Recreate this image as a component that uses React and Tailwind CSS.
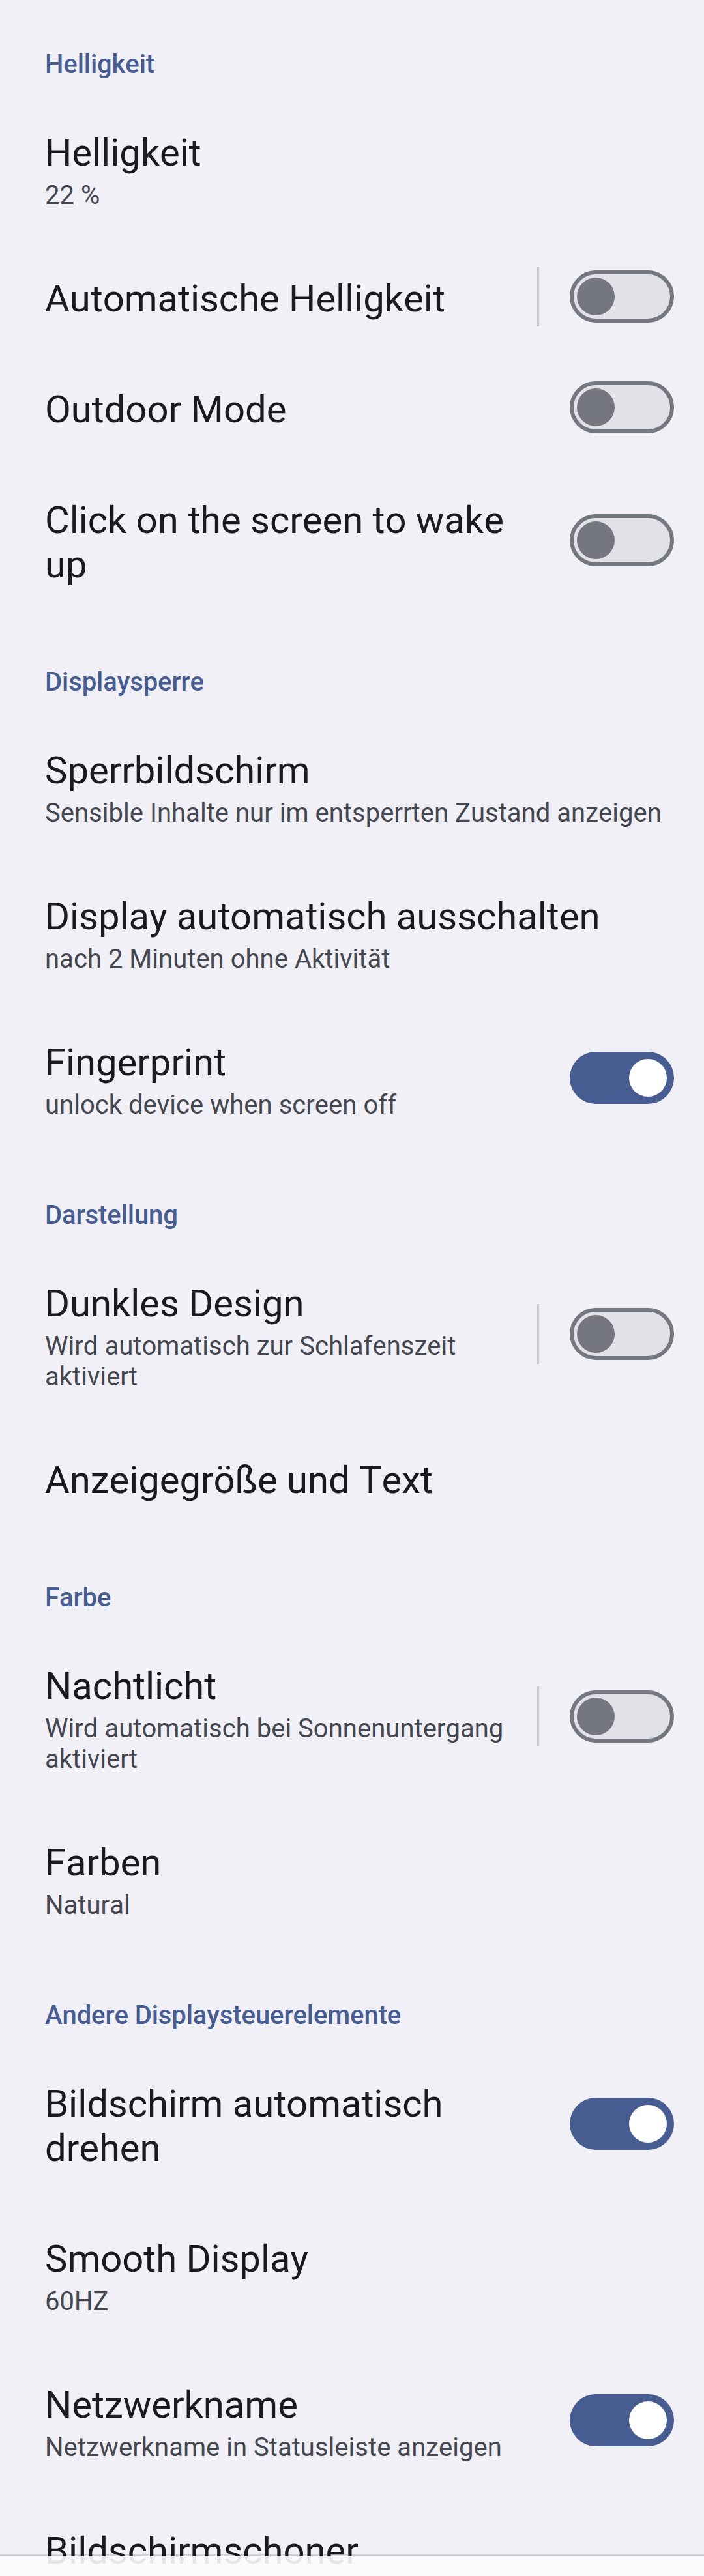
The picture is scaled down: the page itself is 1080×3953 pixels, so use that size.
const sections = [
    {
        title: 'Helligkeit',
        items: [
            { title: 'Helligkeit', summary: '22 %' },
            { title: 'Automatische Helligkeit', toggle: true, divider: true, checked: false },
            { title: 'Outdoor Mode', toggle: true, checked: false },
            { title: 'Click on the screen to wake up', toggle: true, checked: false },
        ],
    },
    {
        title: 'Displaysperre',
        items: [
            { title: 'Sperrbildschirm', summary: 'Sensible Inhalte nur im entsperrten Zustand anzeigen' },
            { title: 'Display automatisch ausschalten', summary: 'nach 2 Minuten ohne Aktivität' },
            { title: 'Fingerprint', summary: 'unlock device when screen off', toggle: true, checked: true },
        ],
    },
    {
        title: 'Darstellung',
        items: [
            { title: 'Dunkles Design', summary: 'Wird automatisch zur Schlafenszeit aktiviert', toggle: true, divider: true, checked: false },
            { title: 'Anzeigegröße und Text' },
        ],
    },
    {
        title: 'Farbe',
        items: [
            { title: 'Nachtlicht', summary: 'Wird automatisch bei Sonnenuntergang aktiviert', toggle: true, divider: true, checked: false },
            { title: 'Farben', summary: 'Natural' },
        ],
    },
    {
        title: 'Andere Displaysteuerelemente',
        items: [
            { title: 'Bildschirm automatisch drehen', toggle: true, checked: true },
            { title: 'Smooth Display', summary: '60HZ' },
            { title: 'Netzwerkname', summary: 'Netzwerkname in Statusleiste anzeigen', toggle: true, checked: true },
            { title: 'Bildschirmschoner' },
        ],
    },
];

function Switch({ checked }) {
    if (checked) {
        return (
            <button role="switch" aria-checked="true" className="flex h-20 w-40 items-center justify-end rounded-full bg-[#475d92] pr-[11px]">
                <span className="size-[58px] rounded-full bg-white" />
            </button>
        );
    }
    return (
        <button role="switch" aria-checked="false" className="flex h-20 w-40 items-center rounded-full border-[6px] border-[#74777f] bg-[#e1e2e8] pl-[5px]">
            <span className="size-[58px] rounded-full bg-[#74777f]" />
        </button>
    );
}

function Row({ item }) {
    return (
        <div className="flex items-center pr-[46px] pl-[69px]">
            <div className={item.summary ? 'min-w-0 flex-1 pt-[51px] pb-[50px]' : 'min-w-0 flex-1 py-[51px]'}>
                <h3 className="text-[58px] leading-[68px] tracking-[-0.05px] text-[#1a1b20]">{item.title}</h3>
                {item.summary && (
                    <p className="mt-2 text-[40px] leading-[47px] tracking-[0.03px] text-[#44474f]">{item.summary}</p>
                )}
            </div>
            {item.toggle && (
                <div className="ml-6 flex w-[210px] items-center justify-between pb-[6.5px]">
                    <span className={item.divider ? 'h-[92px] w-[3px] -my-1.5 bg-[#c4c6cb]' : 'w-[3px]'} />
                    <Switch checked={item.checked} />
                </div>
            )}
        </div>
    );
}

export default function App() {
    return (
        <div className="relative h-[3953px] w-[1080px] overflow-hidden bg-[#f1f0f7] pt-[3px] font-['Roboto',sans-serif] [font-kerning:none]">
            {sections.map((section) => (
                <section key={section.title}>
                    <h2 className="pt-[72px] pb-[27px] pl-[69px] text-[40px] leading-[47px] font-medium tracking-[-0.08px] text-[#475d92]">{section.title}</h2>
                    {section.items.map((item) => (
                        <Row key={item.title} item={item} />
                    ))}
                </section>
            ))}

            {/* navigation bar, slightly see-through */}
            <div className="absolute inset-x-0 bottom-0 h-[33px]">
                <div className="h-[3px] bg-black/12" />
                <div className="h-[30px] bg-[#fcfcfc]/90" />
            </div>
        </div>
    );
}
